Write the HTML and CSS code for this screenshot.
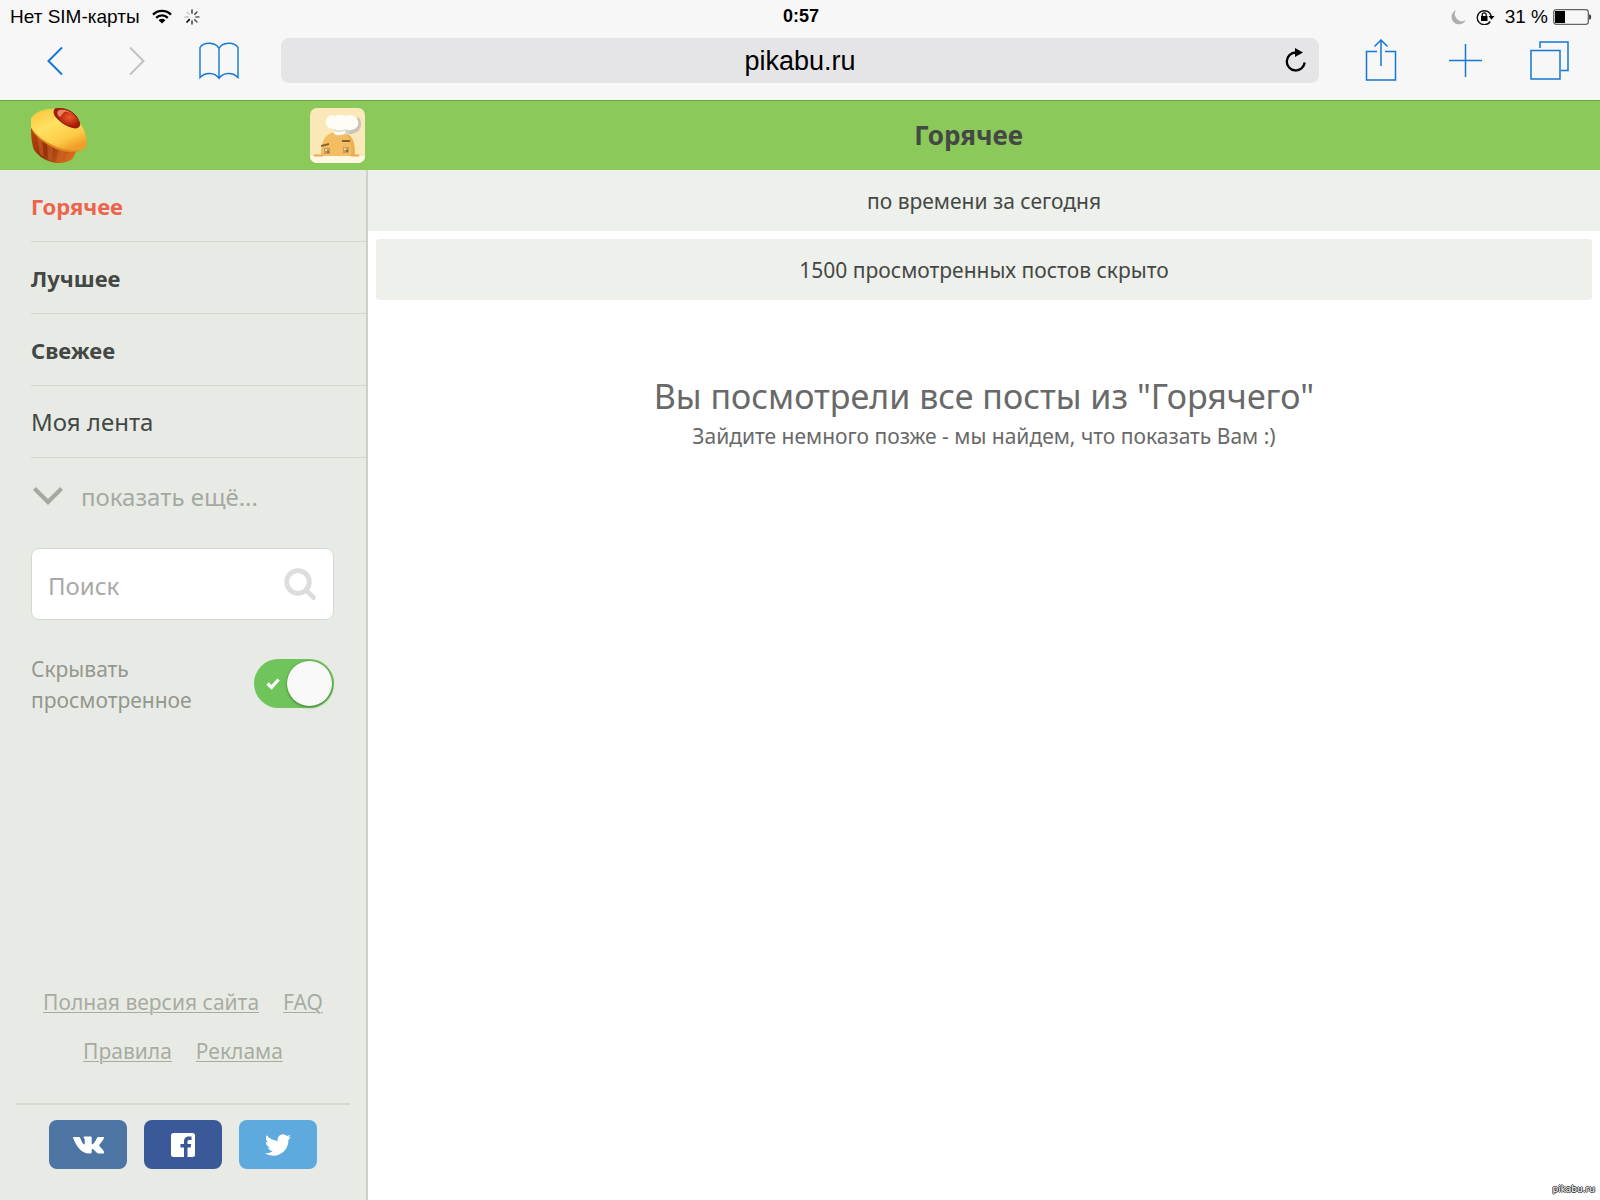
FILE: index.html
```html
<!DOCTYPE html>
<html lang="ru">
<head>
<meta charset="utf-8">
<meta name="viewport" content="width=device-width, initial-scale=1">
<title>Горячее</title>
<link rel="stylesheet" href="styles.css">
</head>
<body>
<div class="browser">
  <div class="status">
    <div class="status-side">
      <span>Нет SIM-карты</span>
      <svg class="wifi" width="20" height="15" viewBox="0 0 20 15" fill="none" stroke="#000" stroke-width="2.3"><path d="M1 5.6a12.6 12.6 0 0 1 18 0M4.2 8.9a8 8 0 0 1 11.6 0"/><path d="M10 14.6 6.6 11.2a4.8 4.8 0 0 1 6.8 0z" fill="#000" stroke="none"/></svg>
      <svg width="16" height="16" viewBox="0 0 16 16" stroke="#222" stroke-width="1.3" stroke-linecap="round"><path d="M8 1v3.2"/><path d="m13 3-2.3 2.3" opacity=".9"/><path d="M15 8h-3.200" opacity=".7"/><path d="m13 13-2.300-2.300" opacity=".8"/><path d="M8 15v-3.200"/><path d="m3 13 2.300-2.300" stroke="#000" stroke-width="1.700"/><path d="M1 8h3.200" opacity=".25"/><path d="m3 3 2.300 2.300" opacity=".2"/></svg>
    </div>
    <time class="clock">0:57</time>
    <div class="status-side status-end">
      <svg width="15" height="16" viewBox="0 0 15 16"><path d="M5 1a7.500 7.500 0 1 0 9.700 10.300A7.300 7.300 0 0 1 5 1z" fill="#aeaeae"/></svg>
      <svg width="19" height="16" viewBox="0 0 19 16"><path d="M14.200 12.500A7 7 0 1 1 15.200 7.500" fill="none" stroke="#111" stroke-width="1.400"/><path d="M12.500 7h6l-3 3.800z"/><path d="M5 7h6.500v5H5z"/><path d="M6.200 7.200V5.800a2 2 0 0 1 4 0v1.400" fill="none" stroke="#000" stroke-width="1.200"/></svg>
      <span>31 %</span>
      <svg class="battery" width="39" height="16" viewBox="0 0 39 16"><rect x=".7" y=".7" width="34.600" height="14.600" rx="2.500" fill="none" stroke="#666" stroke-width="1.300"/><path d="M2 2h10v12H2z"/><path d="M36.200 5q2 .5 2 3t-2 3z" fill="#333"/></svg>
    </div>
  </div>
  <div class="toolbar">
    <button class="tool" aria-label="Назад"><svg width="18" height="30" viewBox="0 0 18 30" fill="none" stroke="#1478d4" stroke-width="2"><path d="M16 1.500 2.500 15 16 28.500"/></svg></button>
    <button class="tool" aria-label="Вперёд" disabled><svg width="18" height="30" viewBox="0 0 18 30" fill="none" stroke="#c1c1c3" stroke-width="2"><path d="M2 1.500 15.500 15 2 28.500"/></svg></button>
    <button class="tool" aria-label="Закладки"><svg width="40" height="38" viewBox="0 0 40 38" fill="none" stroke="#1478d4" stroke-width="1.400"><path d="M20 6.500C16.500-.3 4.500-.3 1 5.500v30c5-5.500 15-5.500 19 1 4-6.500 14-6.500 19-1v-30c-3.500-5.800-15.500-5.800-19 1zv30"/></svg></button>
    <form class="address">
      <input class="address-input" type="text" value="pikabu.ru" aria-label="Адрес">
      <button class="reload" type="button" aria-label="Обновить"><svg width="22" height="25" viewBox="0 0 22 25"><path d="M19.700 14.500A9 9 0 1 1 10.700 4.500" fill="none" stroke="#000" stroke-width="2.300"/><path d="M10 0v9l8-4.500z"/></svg></button>
    </form>
    <button class="tool tool-wide" aria-label="Поделиться"><svg width="32" height="44" viewBox="0 0 32 44" fill="none" stroke="#1478d4" stroke-width="1.500"><path d="M12 12.500H1.500v28.500h29V12.500H20M16 27V1.500M9.500 7.500 16 1 22.500 7.500"/></svg></button>
    <button class="tool tool-wide" aria-label="Новая вкладка"><svg width="33" height="33" viewBox="0 0 33 33" stroke="#1478d4" stroke-width="1.500"><path d="M16.500 0v33M0 16.500h33"/></svg></button>
    <button class="tool tool-wide" aria-label="Вкладки"><svg width="39" height="39" viewBox="0 0 39 39" fill="none" stroke="#1478d4" stroke-width="1.500"><path d="M1 9.500h29V38H1zM10 7V1h28v28.500h-7"/></svg></button>
  </div>
</div>

<header class="header">
  <div class="header-brand">
    <a href="#" aria-label="Главная"><svg width="58" height="56" viewBox="0 0 58 56">
      <defs>
        <linearGradient id="top" x1="0" y1="0" x2=".6" y2="1"><stop offset="0" stop-color="#f9c43a"/><stop offset=".45" stop-color="#ffe162"/><stop offset=".8" stop-color="#fdc945"/><stop offset="1" stop-color="#f0a02a"/></linearGradient>
        <linearGradient id="cup" x1="0" y1="0" x2="1" y2=".4"><stop offset="0" stop-color="#b9460f"/><stop offset=".5" stop-color="#93310a"/><stop offset="1" stop-color="#d9691c"/></linearGradient>
        <radialGradient id="berry" cx=".6" cy=".45"><stop offset="0" stop-color="#ee5a2b"/><stop offset="1" stop-color="#a51708"/></radialGradient>
      </defs>
      <path d="M1 20c0 9 1 17 3 22 5 7 13 12 23 13 7 0 14-2 16-5l5-10z" fill="url(#cup)"/>
      <path d="m7 29 3 17 4 3-2-17zM17 36l1 15 4 2 1-14zM29 41l-3 13 5 .500L35 43zM41 43l-6 10 4-1.500 6-9z" fill="#cf672a" opacity=".5"/>
      <path d="M1 11C4 4 15 0 27 1c12 2 22 10 27 21 3 8 4 14 1 18-5 5-18 4-29-1C13 34 3 26 1 19z" fill="url(#top)"/>
      <path d="M1 19c4 8 14 15 26 20 11 4 23 5 28 1-6 5-18 5-29 1C13 35 4 28 1 19z" fill="#e08a20"/>
      <path d="M25 1c7-2 16 1 21 7 5 7 5 12-1 12-6-1-12-4-16-8-5-4-6-8-4-11z" fill="url(#berry)" stroke="#8d1c08"/>
      <path d="M29 2c-3 2-2 5 1 7l4-5c4-1 7 1 9 3-3-4-9-6-14-5z" fill="#ffad82" opacity=".7"/>
    </svg></a>
    <a class="avatar" href="#" aria-label="Профиль"><svg width="55" height="55" viewBox="0 0 55 55">
      <path fill="#fbe8b9" d="M0 0h55v55H0z"/><path fill="#fff9e4" d="M0 48h55v7H0z"/>
      <path d="M11 48c0-12 2-24 17-24 14 0 17 8 17 24z" fill="#f5bd61"/>
      <path d="M34 25c9 2 11 10 11 23h-4c1-10 0-18-7-23z" fill="#eeb055"/>
      <path d="M4 46.500h9q1 2-2 2H5q-2 0-1-2zM41 46.500h8q1 2-1 2h-6q-2 0-1-2z" fill="#eda64f"/>
      <path d="m11 37 8-2v2l-8 2zM32 32h8v2h-8z" fill="#876436"/>
      <path d="M14 40h6v6h-6zM33 39h6v6h-6z" fill="#c79c58"/><path d="M15 41h2v2h-2zM34 40h2v2h-2z" fill="#e9d3a2"/><path d="M17 43h2v2h-2zM36 42h2v2h-2z" fill="#94703f"/>
      <path d="M25 21c2 4 15 7 19 4 8-1 9-13 4-16l-5 10z" fill="#c9c5ba"/>
      <path d="M24 26v-5c-9 0-10-9-6-12 1-2 5-2 7-1 4-2 8-1 10 0 5-2 9-1 11 2 4 4 3 11-5 12-2 1-4 0-5-1v4q-6 4-12 1z" fill="#fffdf6"/>
      <path d="M24 21q7 3 12 0l3 5-4 1v-4q-5 2-11 0z" fill="#dcd8ce"/>
    </svg></a>
  </div>
  <h1 class="header-title">Горячее</h1>
</header>

<div class="layout">
  <aside class="sidebar">
    <nav class="menu">
      <a class="menu-item menu-strong menu-active" href="#">Горячее</a>
      <a class="menu-item menu-strong" href="#">Лучшее</a>
      <a class="menu-item menu-strong" href="#">Свежее</a>
      <a class="menu-item" href="#">Моя лента</a>
    </nav>
    <button class="more"><svg width="32" height="20" viewBox="0 0 32 20" fill="none" stroke="#a4aaa2" stroke-width="4.200"><path d="m2.500 2.500 13.500 13.500 13.500-13.500"/></svg><span>показать ещё...</span></button>
    <form class="search">
      <input class="search-input" type="search" placeholder="Поиск" aria-label="Поиск">
      <button class="search-button" type="button" aria-label="Найти"><svg width="33" height="33" viewBox="0 0 33 33" fill="none" stroke="#dcdddc" stroke-width="4.800" stroke-linecap="round"><circle cx="14" cy="14" r="11.300"/><path d="m22.500 22.500 7 7"/></svg></button>
    </form>
    <div class="option">
      <label class="option-label" for="hide-seen">Скрывать просмотренное</label>
      <span class="switch">
        <input class="switch-input" id="hide-seen" type="checkbox" checked>
        <svg class="switch-mark" width="14" height="12" viewBox="0 0 14 12" fill="none" stroke="#fff" stroke-width="3.200"><path d="m1.500 5.500 4 4 7-8"/></svg>
      </span>
    </div>
    <footer class="footer">
      <div class="links">
        <a href="#">Полная версия сайта</a>
        <a href="#">FAQ</a>
        <a href="#">Правила</a>
        <a href="#">Реклама</a>
      </div>
      <div class="social">
        <a class="social-link vk" href="#" aria-label="ВКонтакте"><svg width="31" height="18" viewBox="0 0 31 18" fill="#fff"><path d="M.5 1h5.200c1 0 1.300.4 1.600 1.300C8.500 5.600 10 8.400 11 8.400c.6 0 .8-.5.8-1.600V4c-.1-1.800-1.300-2-1.300-2.700 0-.4.5-.8 1.500-.8h5.500c1 0 1.200.4 1.200 1.300v5.300c0 .9.300 1.200.7 1.200 1 0 3-2.900 4.300-5.800.5-1 .9-1.500 1.900-1.500h4.600c.8 0 1 .5.700 1.200-.8 2-4.800 6.700-4.800 7 0 .8 3.500 3.700 4.900 6.400.5 1-.1 1.900-1.300 1.900h-4.500c-1.300 0-2.800-2.400-4.700-3.900-1-.8-1.800-.7-1.800.7v1.600c0 1.100-.4 1.600-2.500 1.600C8.500 17.500 3.600 10.700.2 2.200-.1 1.400-.1 1 .5 1z"/></svg></a>
        <a class="social-link fb" href="#" aria-label="Facebook"><svg width="24" height="24" viewBox="0 0 24 24"><rect width="24" height="24" rx="2.500" fill="#fff"/><path d="M13 24v-9.500H9.500V11H13V8.500C13 5 15 3.500 18 3.500h2.500V7h-2c-1.500 0-2 .6-2 2v2h3.700l-.5 3.500h-3.200V24z" fill="#3b5998"/></svg></a>
        <a class="social-link tw" href="#" aria-label="Twitter"><svg width="28" height="24" viewBox="0 1 24 22" fill="#fff"><path d="M23.950 4.570a10 10 0 0 1-2.820.770 4.960 4.960 0 0 0 2.160-2.720c-.950.550-2 .950-3.130 1.180a4.920 4.920 0 0 0-8.380 4.480C7.690 8.090 4.070 6.130 1.640 3.160a4.820 4.820 0 0 0-.670 2.480c0 1.710.870 3.210 2.190 4.100a4.900 4.900 0 0 1-2.230-.620v.060a4.920 4.920 0 0 0 3.950 4.830 5 5 0 0 1-2.210.080 4.940 4.940 0 0 0 4.600 3.420A9.870 9.870 0 0 1 0 19.540a13.990 13.990 0 0 0 7.560 2.210c9.050 0 14-7.500 14-13.980 0-.210 0-.420-.020-.630a9.940 9.940 0 0 0 2.410-2.570z"/></svg></a>
      </div>
    </footer>
  </aside>
  <main class="content">
    <button class="sort">по времени за сегодня</button>
    <button class="hidden-posts">1500 просмотренных постов скрыто</button>
    <section class="empty">
      <h2 class="empty-title">Вы посмотрели все посты из "Горячего"</h2>
      <p class="empty-text">Зайдите немного позже - мы найдем, что показать Вам :)</p>
    </section>
  </main>
</div>
<div class="watermark">pikabu.ru</div>
</body>
</html>
```
FILE: styles.css
```css
* {
  box-sizing: border-box;
}

body {
  margin: 0;
  min-height: 100vh;
  display: flex;
  flex-direction: column;
  background: #fff;
  color: #444845;
  font-family: "Noto Sans", "Open Sans", sans-serif;
  font-size: 21px;
}

button {
  margin: 0;
  padding: 0;
  border: 0;
  background: none;
  color: inherit;
  font: inherit;
}

svg {
  display: block;
  flex: none;
}

/* Browser chrome */
.browser {
  background: #f7f7f7;
  color: #000;
  font-family: "Liberation Sans", Arial, sans-serif;
  border-bottom: 1px solid #6ea043;
}

.status {
  display: grid;
  grid-template-columns: 1fr auto 1fr;
  align-items: center;
  height: 33px;
  padding: 0 8px 0 10px;
  font-size: 19px;
}

.status-side {
  display: flex;
  align-items: center;
  gap: 12px;
}

.status-end {
  justify-content: flex-end;
  gap: 10px;
}

.battery {
  margin-left: -5px;
}

.clock {
  font-weight: bold;
  font-size: 18px;
}

.toolbar {
  display: flex;
  align-items: center;
  height: 67px;
  padding: 5px 9px 17px 14px;
}

.tool {
  display: flex;
  justify-content: center;
  width: 82px;
}

.tool-wide {
  width: 84px;
}

.address {
  flex: 1;
  display: flex;
  align-items: center;
  height: 45px;
  margin: 0 20px 0 21px;
  padding: 0 12px 0 34px;
  border-radius: 8px;
  background: #e5e5e7;
}

.address-input {
  flex: 1;
  min-width: 0;
  padding: 2px 0 0;
  border: 0;
  background: none;
  color: #000;
  font-family: inherit;
  font-size: 27px;
  text-align: center;
}

/* Site header */
.header {
  display: flex;
  align-items: center;
  height: 69px;
  background: #8bc95a;
}

.header-brand {
  display: flex;
  align-items: center;
  justify-content: space-between;
  width: 368px;
  padding: 0 3px 0 30px;
}

.avatar {
  border-radius: 7px;
  overflow: hidden;
}

.header-title {
  flex: 1;
  margin: 0;
  padding: 0 31px 2px 0;
  font-size: 26px;
  line-height: 36px;
  text-align: center;
}

.layout {
  flex: 1;
  display: flex;
}

/* Sidebar */
.sidebar {
  display: flex;
  flex-direction: column;
  width: 368px;
  border-right: 2px solid #cdd1ca;
  background: #e8ebe5;
}

.menu {
  padding-left: 31px;
}

.menu-item {
  display: block;
  height: 72px;
  border-bottom: 1px solid #d3d7d0;
  color: #444845;
  font-size: 24px;
  line-height: 72px;
  text-decoration: none;
}

.menu-strong {
  font-size: 22px;
  font-weight: bold;
}

.menu-active {
  color: #ec644b;
}

.more {
  display: flex;
  align-items: center;
  gap: 17px;
  height: 76px;
  padding-left: 32px;
  color: #a4aaa2;
  font-size: 24px;
}

.search {
  display: flex;
  align-items: center;
  height: 72px;
  margin: 14px 32px 0 31px;
  padding: 0 16px;
  border: 1px solid #d5d9d0;
  border-radius: 8px;
  background: #fff;
}

.search-input {
  flex: 1;
  min-width: 0;
  padding: 2px 0 0;
  border: 0;
  background: none;
  font: inherit;
  font-size: 24px;
}

.search-input::placeholder {
  color: #a8aaa8;
}

.option {
  display: flex;
  align-items: flex-start;
  justify-content: space-between;
  margin: 34px 32px 0 31px;
  color: #92988e;
  line-height: 31px;
}

.option-label {
  width: 180px;
}

.switch {
  position: relative;
  margin-top: 5px;
}

.switch-input {
  appearance: none;
  display: flex;
  justify-content: flex-end;
  width: 80px;
  height: 49px;
  margin: 0;
  padding: 2px;
  border-radius: 25px;
  background: #6fc45b;
}

.switch-input::before {
  content: "";
  width: 45px;
  height: 45px;
  border-radius: 50%;
  background: #f9f9f9;
  box-shadow: 0 1px 3px #397d2b;
}

.switch-mark {
  position: absolute;
  left: 12px;
  top: 19px;
}

.footer {
  margin-top: auto;
  padding: 0 16px 31px;
}

.links {
  display: flex;
  flex-wrap: wrap;
  justify-content: center;
  column-gap: 24px;
  padding-bottom: 27px;
  border-bottom: 2px solid #d6dad2;
  line-height: 49px;
}

.links a {
  color: #a7aca2;
  text-decoration-thickness: 1px;
  text-underline-offset: 2px;
}

.social {
  display: flex;
  justify-content: center;
  gap: 17px;
  padding-top: 15px;
}

.social-link {
  display: flex;
  align-items: center;
  justify-content: center;
  width: 78px;
  height: 49px;
  border-radius: 8px;
}

.vk {
  background: #4c75a3;
}

.fb {
  background: #3b5998;
}

.tw {
  background: #5ea9dd;
}

/* Content */
.content {
  flex: 1;
  display: flex;
  flex-direction: column;
}

.sort {
  height: 61px;
  background: #eef0eb;
}

.hidden-posts {
  height: 61px;
  margin: 8px;
  border-radius: 4px;
  background: #eef0eb;
}

.empty {
  padding-top: 63px;
  color: #696969;
  text-align: center;
}

.empty-title {
  margin: 0;
  font-size: 34px;
  font-weight: normal;
  line-height: 50px;
}

.empty-text {
  margin: 0;
  line-height: 30px;
}

.watermark {
  position: absolute;
  right: 5px;
  bottom: 5px;
  color: #fff;
  font: 9px/12px "DejaVu Sans", sans-serif;
  text-shadow: -1px 0 #333, 1px 0 #333, 0 -1px #333, 0 1px #333;
}
```
